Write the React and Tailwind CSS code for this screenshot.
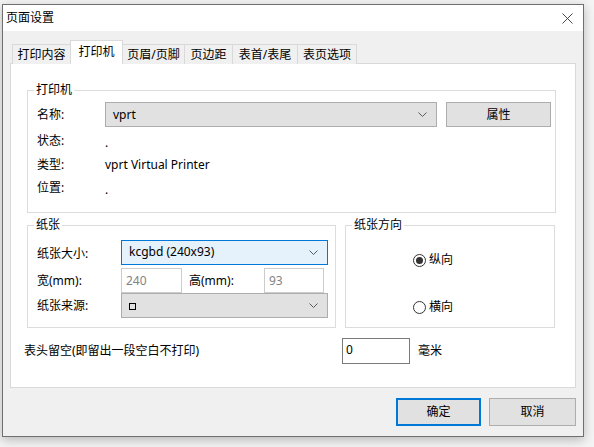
import React from 'react';

const font = { fontFamily: '"Noto Sans", "Noto Sans CJK SC", sans-serif' };

function Chevron() {
  return (
    <svg width="9" height="5" viewBox="0 0 9 5" className="shrink-0">
      <path d="M0.5 0.5 L4.5 4.5 L8.5 0.5" fill="none" stroke="#5a5a5a" strokeWidth="1" />
    </svg>
  );
}

function Select({ value, width, focused }) {
  return (
    <div
      className={[
        'flex items-center justify-between h-[25px] pl-[7px] pr-[9px] border',
        focused ? 'bg-[#e5f1fb] border-[#0078d7]' : 'bg-[#e1e1e1] border-[#adadad]',
      ].join(' ')}
      style={{ width }}
    >
      {value ? (
        <span className="text-[12px] leading-none text-black">{value}</span>
      ) : (
        <span className="w-[7px] h-[7px] border border-black mt-[1px]" />
      )}
      <Chevron />
    </div>
  );
}

function Tab({ label, width, active, first }) {
  if (active) {
    return (
      <div
        className="h-[24px] bg-white border border-b-0 border-[#d9d9d9] flex items-center justify-center -ml-px relative z-10"
        style={{ width }}
      >
        <span className="text-[12px] text-black pb-[2px]">{label}</span>
      </div>
    );
  }
  return (
    <div
      className={[
        'h-[20px] bg-[#f0f0f0] border border-b-0 border-[#d9d9d9] flex items-center justify-center',
        first ? '' : '-ml-px',
      ].join(' ')}
      style={{ width }}
    >
      <span className="text-[12px] text-black">{label}</span>
    </div>
  );
}

function Radio({ label, checked }) {
  return (
    <div className="flex items-center h-[16px]">
      <span className="w-[13px] h-[13px] rounded-full border border-[#333] bg-white flex items-center justify-center">
        {checked && <span className="w-[7px] h-[7px] rounded-full bg-[#333]" />}
      </span>
      <span className="ml-[3px] text-[12px] text-black">{label}</span>
    </div>
  );
}

export default function App() {
  const tabs = [
    { label: '打印内容', width: 59 },
    { label: '打印机', width: 53, active: true },
    { label: '页眉/页脚', width: 63 },
    { label: '页边距', width: 49 },
    { label: '表首/表尾', width: 66 },
    { label: '表页选项', width: 60 },
  ];

  return (
    <div className="w-[594px] h-[447px] bg-[#f4f4f4] pt-[4px] pl-[2px] overflow-hidden" style={font}>
      <div className="w-[582px] h-[433px] border border-[#6f6f6f] bg-[#f0f0f0] flex flex-col shadow-[0_3px_10px_rgba(0,0,0,0.25)]">
        {/* 标题栏 */}
        <div className="h-[26px] bg-white flex items-center justify-between pl-[3px] pr-[10px]">
          <span className="text-[12px] text-black">页面设置</span>
          <svg width="11" height="11" viewBox="0 0 11 11">
            <path d="M0.5 0.5 L10.5 10.5 M10.5 0.5 L0.5 10.5" stroke="#333" strokeWidth="0.9" />
          </svg>
        </div>

        {/* 内容 */}
        <div className="flex-1 px-[7px] pt-[9px]">
          <div className="flex items-end pl-[2px] -mb-px">
            {tabs.map((t, i) => (
              <Tab key={t.label} {...t} first={i === 0} />
            ))}
          </div>

          <div className="h-[325px] bg-white border border-[#d9d9d9] pt-[18px]">
            <div className="pl-[16px]">
              {/* 打印机 */}
              <fieldset className="w-[529px] border border-[#dcdcdc] pl-[6px] pb-[13px]">
                <legend className="px-[2px] text-[12px] leading-[16px] text-black">打印机</legend>
                <div className="mt-[4px] flex items-center h-[25px]">
                  <span className="w-[71px] pl-[3px] text-[12px]">名称:</span>
                  <Select value="vprt" width={332} />
                  <button className="ml-[9px] w-[105px] h-[25px] bg-[#e1e1e1] border border-[#adadad] text-[12px] text-black">
                    属性
                  </button>
                </div>
                <div className="mt-[2px] flex items-center h-[24px] text-[12px]">
                  <span className="w-[71px] pl-[3px]">状态:</span>
                  <span className="pt-[4px]">.</span>
                </div>
                <div className="flex items-center h-[24px] text-[12px]">
                  <span className="w-[71px] pl-[3px]">类型:</span>
                  <span>vprt Virtual Printer</span>
                </div>
                <div className="flex items-center h-[22px] text-[12px]">
                  <span className="w-[71px] pl-[3px]">位置:</span>
                  <span className="pt-[4px]">.</span>
                </div>
              </fieldset>

              <div className="mt-[4px] flex gap-[9px]">
                {/* 纸张 */}
                <fieldset className="w-[309px] border border-[#dcdcdc] pl-[6px] pb-[9px]">
                  <legend className="px-[2px] text-[12px] leading-[16px] text-black">纸张</legend>
                  <div className="mt-[7px] flex items-center h-[24px]">
                    <span className="w-[87px] pl-[3px] text-[12px] pt-[3px]">纸张大小:</span>
                    <Select value="kcgbd (240x93)" width={207} focused />
                  </div>
                  <div className="mt-[4px] flex items-center h-[25px] text-[12px]">
                    <span className="w-[87px] pl-[3px]">宽(mm):</span>
                    <div className="w-[61px] h-[25px] border border-[#cccccc] pl-[4px] pt-[3px] text-[#838383]">240</div>
                    <span className="w-[82px] pl-[7px]">高(mm):</span>
                    <div className="w-[60px] h-[25px] border border-[#cccccc] pl-[4px] pt-[3px] text-[#838383]">93</div>
                  </div>
                  <div className="flex items-center h-[25px]">
                    <span className="w-[87px] pl-[3px] text-[12px]">纸张来源:</span>
                    <Select value="" width={207} />
                  </div>
                </fieldset>

                {/* 纸张方向 */}
                <fieldset className="w-[210px] border border-[#dcdcdc] pl-[6px]">
                  <legend className="px-[2px] text-[12px] leading-[16px] text-black">纸张方向</legend>
                  <div className="pl-[61px] pt-[19px] flex flex-col gap-[31px]">
                    <Radio label="纵向" checked />
                    <Radio label="横向" />
                  </div>
                </fieldset>
              </div>
            </div>

            <div className="mt-[10px] pl-[13px] flex items-center text-[12px]">
              <span className="w-[318px]">表头留空(即留出一段空白不打印)</span>
              <div className="w-[68px] h-[26px] border border-[#7a7a7a] pl-[3px] pt-[2px]">0</div>
              <span className="ml-[8px]">毫米</span>
            </div>
          </div>

          <div className="mt-[10px] flex justify-end gap-[8px]">
            <button className="w-[85px] h-[28px] bg-[#e1e1e1] border-2 border-[#0078d7] text-[12px] text-black">确定</button>
            <button className="w-[87px] h-[28px] bg-[#e1e1e1] border border-[#adadad] text-[12px] text-black">取消</button>
          </div>
        </div>
      </div>
    </div>
  );
}
